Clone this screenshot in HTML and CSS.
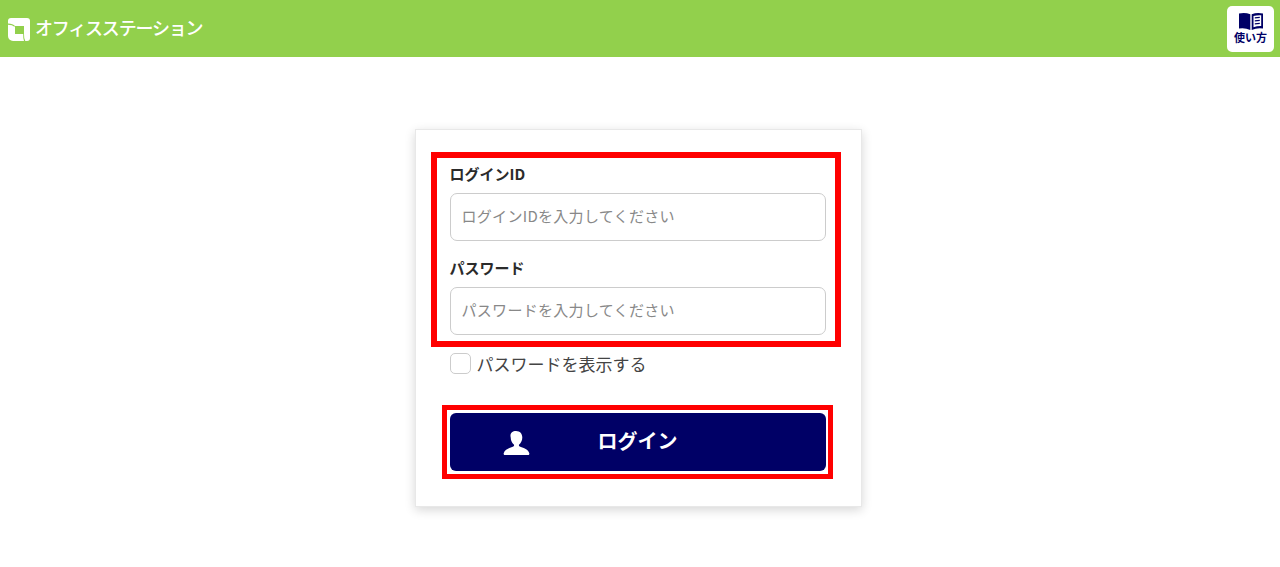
FILE: index.html
```html
<!DOCTYPE html>
<html lang="ja">
	<head>
		<title>ログイン</title>
		<link rel="stylesheet" href="styles.css">
	</head>
	<body>
		<header class="topbar">
			<div class="logo">
				<svg class="logo-mark" viewBox="0 0 22 23" width="22" height="23">
					<path fill="#fff" d="M3 0h16a3 3 0 0 1 3 3v17a3 3 0 0 1-3 3H5a5 5 0 0 1-5-5V3a3 3 0 0 1 3-3z"/>
					<path fill="#92d04c" d="M7 8h9v8H7z"/>
					<path fill="#92d04c" d="M0 5.500q5 0 7 2.500l-.6.800Q4.500 6.800 0 6.800z"/>
					<path fill="#92d04c" d="M15.200 16h.8q-.2 4 1.300 7h-1.300q-1-3-.8-7z"/>
				</svg>
				<span class="logo-text">オフィスステーション</span>
			</div>
			<a class="help" href="#">
				<svg viewBox="0 0 24 18" width="24" height="18">
					<path fill="#000066" d="M0 1.500q6-1.500 11.300.8V18Q6 15.500 0 16.500z"/>
					<path fill="#000066" d="M12.700 2.300Q18 0 24 1.500v15q-6-1-11.300 1.500zM14.500 4v11.200q3.500-1.200 7.700-1.100V3.200q-4-.3-7.700.8z"/>
					<path fill="#000066" d="M15.800 5.300l5-.6v1.300l-5 .6zM15.800 8.300l5-.6V9l-5 .6zM15.800 11.300l5-.6V12l-5 .6z"/>
				</svg>
				<span>使い方</span>
			</a>
		</header>
		<main class="page">
			<form class="card">
				<div class="mark fields">
					<div class="form-group">
						<label>ログインID</label>
						<input type="text" placeholder="ログインIDを入力してください">
					</div>
					<div class="form-group">
						<label>パスワード</label>
						<input type="password" placeholder="パスワードを入力してください">
					</div>
				</div>
				<label class="show-pass">
					<span class="checkbox"></span>
					パスワードを表示する
				</label>
				<div class="mark submit">
					<button type="button" class="login">
						<svg class="login-icon" viewBox="0 0 28 26" width="28" height="26">
							<path fill="#fff" d="M14 1c4 0 6.300 2.800 6.300 6.500 0 3-1.400 5.600-3.100 7-.5.500-.4 1.600.5 2.100 3 1.200 8.500 2.600 9.600 6.700.2.800-.1 1.700-1 1.700H2.700c-.9 0-1.200-.9-1-1.700 1.100-4.100 6.600-5.500 9.600-6.700.9-.5 1-1.600.5-2.100-1.700-1.400-3.100-4-3.100-7C7.700 3.800 10 1 14 1z"/>
						</svg>
						<span>ログイン</span>
					</button>
				</div>
			</form>
		</main>
	</body>
</html>
```
FILE: styles.css
```css
* {
	box-sizing: border-box;
}

body {
	margin: 0;
	background: #fff;
	color: #333;
	font-family: "Noto Sans CJK JP", "Noto Sans", sans-serif;
}

.topbar {
	display: flex;
	justify-content: space-between;
	align-items: center;
	height: 57px;
	padding: 0 6px 0 8px;
	background: #92d04c;
}

.logo {
	display: flex;
	align-items: center;
	gap: 5px;
	margin-top: 1px;
}

.logo-text {
	margin-top: -5px;
	color: #fff;
	font-size: 18px;
	font-weight: 500;
	letter-spacing: -1.2px;
	white-space: nowrap;
}

.help {
	display: flex;
	flex-direction: column;
	align-items: center;
	width: 47px;
	height: 46px;
	margin-top: 1px;
	padding-top: 6px;
	border-radius: 5px;
	background: #fff;
	color: #000066;
	font-size: 11px;
	font-weight: 700;
	line-height: 14px;
	text-decoration: none;
}

.page {
	display: flex;
	justify-content: center;
	padding: 72px 0 61px 0;
	margin-left: -4px;
}

.card {
	display: flex;
	flex-direction: column;
	width: 447px;
	height: 378px;
	padding: 22px 0 0 15px;
	background: #fff;
	border: 1px solid #e8e8e8;
	box-shadow: 0 3px 10px rgba(0, 0, 0, 0.16);
}

.fields {
	width: 410px;
	height: 195px;
	padding: 4px 9px 0 13px;
	border: 6px solid #ff0000;
}

.form-group {
	margin-bottom: 15px;
}

.form-group label {
	display: block;
	height: 31px;
	color: #2b2b2b;
	font-size: 15px;
	font-weight: 700;
	line-height: 24px;
}

.form-group input {
	display: block;
	width: 376px;
	height: 48px;
	padding: 0 11px 4px 11px;
	border: 1px solid #ccc;
	border-radius: 7px;
	font-family: inherit;
	font-size: 15px;
	letter-spacing: 0.3px;
	outline: none;
}

.form-group input::placeholder {
	color: #888;
}

.show-pass {
	display: flex;
	align-items: center;
	gap: 6px;
	width: 376px;
	height: 22px;
	margin: 5px 0 0 19px;
	color: #444;
	font-size: 17px;
}

.checkbox {
	width: 21px;
	height: 21px;
	border: 1px solid #ccc;
	border-radius: 5px;
}

.submit {
	width: 391px;
	height: 74px;
	margin: 31px 0 0 11px;
	padding: 3px 2px 3px 3px;
	border: 5px solid #ff0000;
}

.login {
	position: relative;
	display: flex;
	justify-content: center;
	align-items: center;
	width: 100%;
	height: 58px;
	padding: 0 0 3px 0;
	border: none;
	border-radius: 6px;
	background: #000066;
	color: #fff;
	font-family: inherit;
	font-size: 20px;
	font-weight: 700;
}

.login-icon {
	position: absolute;
	left: 52px;
	top: 17px;
}
```
